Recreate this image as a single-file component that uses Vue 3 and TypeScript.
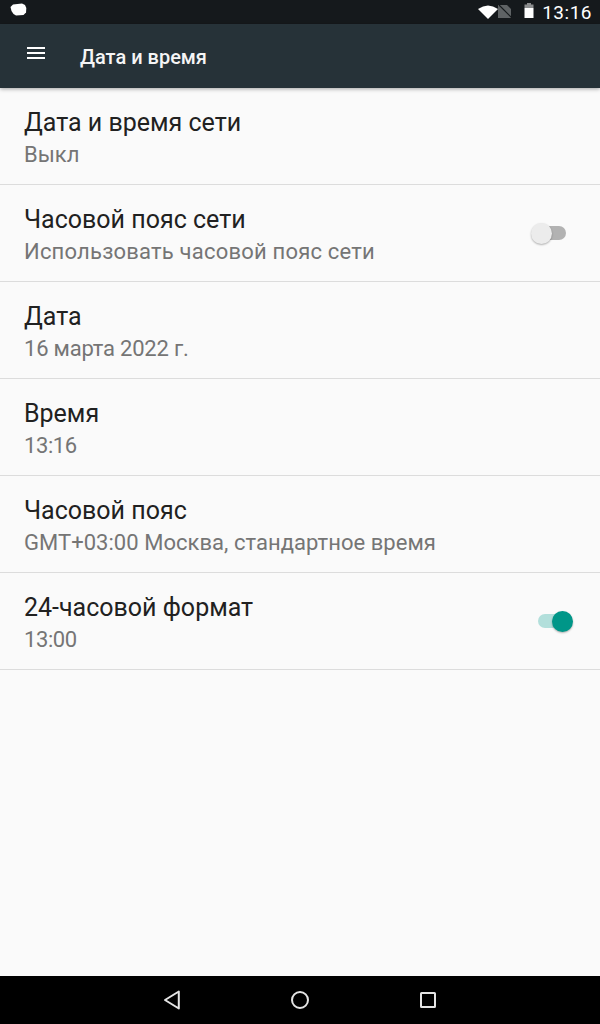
<template>
  <div class="screen">
    <div class="status-bar">
      <svg class="notif" width="18" height="14" viewBox="0 0 18 14">
        <path d="M3 1.5 L12 0.5 L15 2 L16.3 5 L16 9.5 L13.5 12 L6 12.5 L3.5 11 L1.5 8 L0.5 4 Z" fill="#fff" />
      </svg>
      <div class="status-right">
        <svg class="wifi" width="20" height="14" viewBox="0 0 20 14">
          <path d="M0 4 Q10 -3 20 4 L10 14 Z" fill="#fff" />
        </svg>
        <svg class="sim" width="14" height="14" viewBox="0 0 14 14">
          <path d="M0 0 H9 L13 4 V13 H0 Z" fill="#5f6365" />
          <path d="M1 0 L14 13" stroke="#15191c" stroke-width="1.2" />
        </svg>
        <svg class="battery" width="10" height="16" viewBox="0 0 10 16">
          <rect x="3" y="0" width="4" height="2" fill="#8b8d8e" />
          <rect x="0.5" y="1.5" width="9" height="3.5" fill="#8b8d8e" />
          <rect x="0.5" y="5" width="9" height="10" fill="#fff" />
        </svg>
        <span class="clock">13:16</span>
      </div>
    </div>

    <header class="toolbar">
      <svg class="menu" width="18" height="12" viewBox="0 0 18 12">
        <rect y="0" width="18" height="2" fill="#fff" />
        <rect y="5" width="18" height="2" fill="#fff" />
        <rect y="10" width="18" height="2" fill="#fff" />
      </svg>
      <h1 class="title">Дата и время</h1>
    </header>

    <main class="list">
      <div v-for="row in rows" :key="row.title" class="row">
        <div class="texts">
          <div class="row-title">{{ row.title }}</div>
          <div class="row-sub" :style="{ letterSpacing: `${row.tracking ?? 0}px` }">{{ row.sub }}</div>
        </div>
        <div v-if="row.toggle !== undefined" class="switch" :class="{ on: row.toggle }">
          <span class="track"></span>
          <span class="thumb"></span>
        </div>
      </div>
    </main>

    <nav class="nav-bar">
      <svg width="18" height="20" viewBox="0 0 18 20">
        <path d="M15.8 1.5 V18.5 L2 10 Z" fill="none" stroke="#e4e4e4" stroke-width="2" stroke-linejoin="round" />
      </svg>
      <svg width="20" height="20" viewBox="0 0 20 20">
        <circle cx="10" cy="10" r="8" fill="none" stroke="#e4e4e4" stroke-width="2" />
      </svg>
      <svg width="18" height="18" viewBox="0 0 18 18">
        <rect x="2" y="2" width="14" height="14" rx="0.5" fill="none" stroke="#e4e4e4" stroke-width="2" />
      </svg>
    </nav>
  </div>
</template>

<script setup lang="ts">
interface Row {
  title: string;
  sub: string;
  tracking?: number;
  toggle?: boolean;
}

const rows: Row[] = [
  { title: 'Дата и время сети', sub: 'Выкл' },
  { title: 'Часовой пояс сети', sub: 'Использовать часовой пояс сети', tracking: 0.2, toggle: false },
  { title: 'Дата', sub: '16 марта 2022 г.', tracking: -0.2 },
  { title: 'Время', sub: '13:16', tracking: -0.4 },
  { title: 'Часовой пояс', sub: 'GMT+03:00 Москва, стандартное время', tracking: 0.04 },
  { title: '24-часовой формат', sub: '13:00', tracking: -0.4, toggle: true },
];
</script>

<style>
html,
body {
  margin: 0;
  background: #fafafa;
}
</style>

<style scoped>
.screen {
  width: 600px;
  height: 1024px;
  display: flex;
  flex-direction: column;
  background: #fafafa;
  font-family: Roboto, "Noto Sans", sans-serif;
  overflow: hidden;
}

.status-bar {
  height: 24px;
  flex: none;
  display: flex;
  justify-content: space-between;
  align-items: center;
  background: #15191c;
  padding: 0 8px 0 10px;
  box-sizing: border-box;
}

.notif {
  margin-top: -4px;
}

.status-right {
  display: flex;
  align-items: center;
}

.wifi {
  margin-bottom: 1px;
}

.sim {
  margin-bottom: 1px;
}

.battery {
  margin-left: 12px;
  margin-bottom: 3px;
}

.clock {
  margin-left: 8px;
  color: #fff;
  font-size: 19px;
  letter-spacing: 0.5px;
}

.toolbar {
  height: 64px;
  flex: none;
  display: flex;
  align-items: center;
  background: #263238;
  box-shadow: 0 1px 4px rgba(0, 0, 0, 0.35);
  position: relative;
  color: #fff;
}

.menu {
  margin: -7px 0 0 27px;
}

.title {
  margin: 2px 0 0 35px;
  font-size: 20px;
  font-weight: 500;
  color: #f5f5f5;
}

.list {
  flex: 1;
}

.row {
  height: 97px;
  box-sizing: border-box;
  border-bottom: 1px solid #dcdcdc;
  padding: 0 28px 0 24px;
  display: flex;
  align-items: center;
  justify-content: space-between;
}

.texts {
  padding-top: 4px;
}

.row-title {
  font-size: 25px;
  line-height: 33px;
  color: #212121;
}

.row-sub {
  font-size: 22px;
  line-height: 31px;
  color: #757575;
}

.switch {
  position: relative;
  width: 41px;
  height: 24px;
}

.track {
  position: absolute;
  left: 7px;
  top: 5px;
  width: 28px;
  height: 14px;
  border-radius: 7px;
  background: #b2b2b2;
}

.thumb {
  position: absolute;
  left: 0;
  top: 2px;
  width: 21px;
  height: 21px;
  border-radius: 50%;
  background: #ececec;
  box-shadow: 0 1px 2px rgba(0, 0, 0, 0.3);
}

.switch.on .track {
  background: #b2dfdb;
}

.switch.on .thumb {
  left: 21px;
  background: #009688;
}

.nav-bar {
  height: 48px;
  flex: none;
  background: #000;
  display: flex;
  align-items: center;
  justify-content: space-between;
  padding: 0 163px;
}
</style>
